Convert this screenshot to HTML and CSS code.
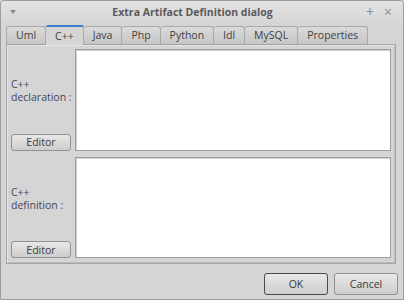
FILE: index.html
```html
<!DOCTYPE html>
<html lang="en">

<head>
    <meta charset="UTF-8">
    <meta name="viewport" content="width=device-width, initial-scale=1.0">
    <title>Extra Artifact Definition dialog</title>
    <link rel="stylesheet" href="styles.css">
</head>

<body>
    <div class="window">
        <div class="titlebar">
            <span class="menu-arrow"></span>
            <span class="title">Extra Artifact Definition dialog</span>
            <span class="win-btn">+</span>
            <span class="win-btn close">&#215;</span>
        </div>

        <div class="content">
            <div class="tabs">
                <div class="tab">Uml</div>
                <div class="tab active">C++</div>
                <div class="tab">Java</div>
                <div class="tab">Php</div>
                <div class="tab">Python</div>
                <div class="tab">Idl</div>
                <div class="tab">MySQL</div>
                <div class="tab">Properties</div>
            </div>

            <div class="panel">
                <div class="row">
                    <div class="side">
                        <div class="label">C++<br>declaration :</div>
                        <button class="btn small">Editor</button>
                    </div>
                    <div class="editbox"></div>
                </div>
                <div class="row">
                    <div class="side">
                        <div class="label">C++<br>definition :</div>
                        <button class="btn small">Editor</button>
                    </div>
                    <div class="editbox"></div>
                </div>
            </div>

            <div class="footer">
                <button class="btn big default">OK</button>
                <button class="btn big">Cancel</button>
            </div>
        </div>
    </div>
</body>

</html>
```

FILE: styles.css
```css
body {
    margin: 0;
    padding: 0;
    font-family: "Open Sans", "Noto Sans", sans-serif;
    font-size: 10.5px;
    background-color: #d5d5d5;
}

.window {
    width: 404px;
    height: 300px;
    box-sizing: border-box;
    border: 1px solid #9c9c9c;
    border-radius: 4px 4px 0 0;
    background-color: #d5d5d5;
    display: flex;
    flex-direction: column;
}

.titlebar {
    height: 21px;
    display: flex;
    align-items: center;
    padding: 0 6px 0 8px;
    background: linear-gradient(#e2e2e2, #d8d8d8);
    border-radius: 4px 4px 0 0;
    color: #5a5a5a;
}

.menu-arrow {
    width: 0;
    height: 0;
    border-left: 3px solid transparent;
    border-right: 3px solid transparent;
    border-top: 4px solid #8a8a8a;
    margin-left: 1px;
}

.title {
    flex: 1;
    text-align: center;
    font-weight: bold;
    font-size: 10.5px;
    margin-left: 8px;
}

.win-btn {
    color: #8c8c8c;
    font-size: 14px;
    width: 18px;
    text-align: center;
}

.content {
    flex: 1;
    display: flex;
    flex-direction: column;
    padding: 3px 7px 0 5px;
}

.tabs {
    display: flex;
    height: 19px;
    align-items: flex-end;
    position: relative;
    z-index: 1;
}

.tab {
    height: 18px;
    box-sizing: border-box;
    padding: 0 9px;
    line-height: 17px;
    color: #404040;
    border: 1px solid #a9a9a9;
    border-bottom: none;
    border-left: none;
    border-radius: 3px 3px 0 0;
    background: linear-gradient(#dadada, #c6c6c6);
}

.tab:first-child {
    border-left: 1px solid #a9a9a9;
}

.tab.active {
    height: 20px;
    line-height: 18px;
    margin-bottom: -1px;
    background: #d5d5d5;
    border-top: 2px solid #3b7fd1;
    border-radius: 2px 2px 0 0;
}

.panel {
    height: 220px;
    box-sizing: border-box;
    border: 1px solid #a4a4a4;
    box-shadow: inset 1px 1px 0 #e4e4e4, inset -1px -1px 0 #bdbdbd;
    padding: 4px 4px 5px 4px;
    display: flex;
    flex-direction: column;
    gap: 6px;
}

.row {
    flex: 1;
    display: flex;
    gap: 4px;
}

.side {
    width: 60px;
    display: flex;
    flex-direction: column;
}

.label {
    flex: 1;
    display: flex;
    align-items: center;
    color: #45475a;
    line-height: 13px;
    white-space: nowrap;
}

.editbox {
    flex: 1;
    background-color: #ffffff;
    border: 1px solid #9d9d9d;
    box-shadow: inset 1px 1px 0 #d0d0d0;
}

.btn {
    font-family: "Open Sans", "Noto Sans", sans-serif;
    font-size: 10.5px;
    color: #3a3a3a;
    border: 1px solid #929292;
    border-radius: 3px;
    background: linear-gradient(#e8e8e8, #cdcdcd);
    padding: 0;
}

.btn.small {
    height: 17px;
    width: 60px;
}

.footer {
    display: flex;
    justify-content: flex-end;
    gap: 6px;
    margin-top: 9px;
    margin-right: -2px;
}

.btn.big {
    width: 64px;
    height: 22px;
}

.btn.default {
    border-color: #4a4a4a;
}
```
